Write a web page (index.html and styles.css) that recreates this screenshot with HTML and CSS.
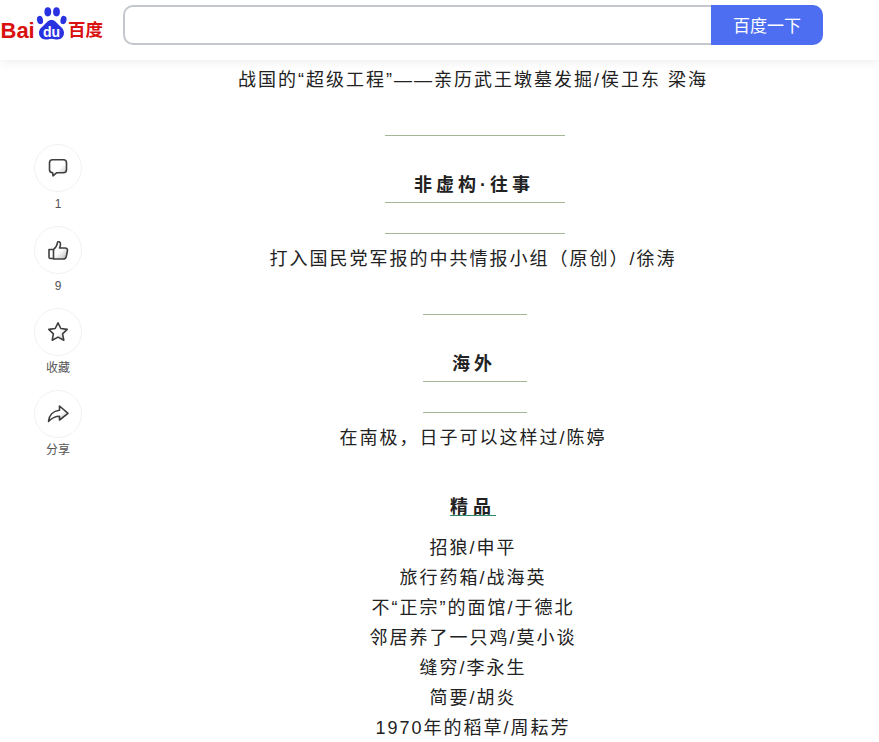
FILE: index.html
```html
<!DOCTYPE html>
<html lang="zh-CN">
<head>
<meta charset="utf-8">
<title>百度一下</title>
<link rel="stylesheet" href="styles.css">
</head>
<body>
<header class="topbar">
  <svg class="logo" width="104" height="42" viewBox="0 0 104 42">
    <text class="logo-en" x="0.500" y="37.500">Bai</text>
    <g class="paw">
      <ellipse cx="40" cy="20" rx="3" ry="4.200" transform="rotate(-12 40 20)"/>
      <ellipse cx="47.800" cy="11.800" rx="3.400" ry="4.600"/>
      <ellipse cx="56.500" cy="11.800" rx="3.400" ry="4.600"/>
      <ellipse cx="63.500" cy="20" rx="3" ry="4.200" transform="rotate(12 63.500 20)"/>
      <path d="M51.500 20c-3.600 0-5 2.700-7.300 5-2.500 2.300-5.200 4-5.200 8 0 3.600 2.900 6.500 6.500 6.500 2.500 0 4-.8 6-.8s3.500.8 6 .8c3.600 0 6.500-2.900 6.500-6.500 0-4-2.700-5.700-5.200-8-2.300-2.300-3.700-5-7.300-5z"/>
    </g>
    <text class="logo-du" x="51.500" y="36.500">du</text>
    <text class="logo-cn" x="68" y="36">百度</text>
  </svg>
  <form class="search">
    <input class="search-input" type="text" aria-label="搜索">
    <button class="search-btn" type="button">百度一下</button>
  </form>
</header>
<div class="page">
  <aside class="actions">
    <div class="action">
      <div class="circle">
        <svg width="22" height="22" viewBox="0 0 22 22"><defs><linearGradient id="g" x1="0.200" y1="0.200" x2="1" y2="1"><stop offset="0.450" stop-color="#fff"/><stop offset="1" stop-color="#b5b5b5"/></linearGradient></defs>
          <path class="ico" d="M5.500 2.800h11c1.900 0 3 1.100 3 3v7c0 1.900-1.100 3-3 3H9.500L6 18.800l-.3-3C3.700 15.600 2.500 14.600 2.500 12.800v-7c0-1.900 1.100-3 3-3z"/></svg>
      </div>
      <span class="label">1</span>
    </div>
    <div class="action">
      <div class="circle">
        <svg width="22" height="22" viewBox="0 0 22 22">
          <path class="ico" d="M2 10.500h4.500v9h-3c-1 0-1.500-.6-1.500-1.500zM6.500 10.500c2-1.500 3.500-3.500 4-7 .2-1.300 3-1.200 3 1.500 0 1.500-.5 3-1 4h5.500c1.700 0 2.800 1.300 2.400 3l-1.100 5.500c-.4 1.500-1.300 2.500-3 2.500H6.500z"/></svg>
      </div>
      <span class="label">9</span>
    </div>
    <div class="action">
      <div class="circle">
        <svg width="22" height="22" viewBox="0 0 22 22">
          <path class="ico" d="M11 1.800l2.800 5.700 6.400.9-4.600 4.400 1.200 6.400-5.800-3.100-5.800 3.100 1.200-6.400L1.800 8.400l6.400-.9z"/></svg>
      </div>
      <span class="label">收藏</span>
    </div>
    <div class="action">
      <div class="circle">
        <svg width="22" height="22" viewBox="0 0 22 22">
          <path class="ico" d="M12.500 3l8.500 7.300-8.500 6.700v-3.800c-4.500 0-7.500 1.500-11 5.300.5-6 4.500-10.500 11-11.200z"/></svg>
      </div>
      <span class="label">分享</span>
    </div>
  </aside>
  <main class="article">
    <p class="line">战国的“超级工程”——亲历武王墩墓发掘/侯卫东 梁海</p>

    <section class="block">
      <div class="rule rule-wide"></div>
      <h2 class="title">非虚构·往事</h2>
      <div class="rule rule-wide rule-after"></div>
      <div class="rule rule-wide rule-last"></div>
      <p class="line">打入国民党军报的中共情报小组（原创）/徐涛</p>
    </section>

    <section class="block">
      <div class="rule rule-mid"></div>
      <h2 class="title">海外</h2>
      <div class="rule rule-mid rule-after"></div>
      <div class="rule rule-mid rule-last"></div>
      <p class="line">在南极，日子可以这样过/陈婷</p>
    </section>

    <section class="block-plain">
      <h2 class="title-inline"><span class="title-text">精品</span></h2>
      <p class="line">招狼/申平</p>
      <p class="line">旅行药箱/战海英</p>
      <p class="line">不“正宗”的面馆/于德北</p>
      <p class="line">邻居养了一只鸡/莫小谈</p>
      <p class="line">缝穷/李永生</p>
      <p class="line">简要/胡炎</p>
      <p class="line">1970年的稻草/周耘芳</p>
    </section>
  </main>
</div>
</body>
</html>
```
FILE: styles.css
```css
html, body {
  margin: 0;
  padding: 0;
  height: 100%;
  overflow: hidden;
  background: #fff;
}
body {
  font-family: "Liberation Sans", "Noto Sans CJK SC", sans-serif;
  color: #222;
}
.topbar {
  height: 60px;
  display: flex;
  align-items: flex-start;
  background: #fff;
  box-shadow: 0 2px 10px rgba(0, 0, 0, 0.07);
  position: relative;
}
.logo {
  display: block;
  flex: none;
}
.logo-en {
  font: bold 22px "Liberation Sans", sans-serif;
  fill: #d9120f;
}
.logo-cn {
  font: bold 17.5px "Noto Sans CJK SC", sans-serif;
  fill: #d9120f;
}
.logo-du {
  font: bold 14px "Liberation Sans", sans-serif;
  fill: #fff;
  text-anchor: middle;
}
.paw {
  fill: #2932e1;
}
.search {
  display: flex;
  margin: 5px 0 0 19px;
  height: 40px;
}
.search-input {
  box-sizing: border-box;
  width: 588px;
  height: 40px;
  border: 2px solid #c4c7ce;
  border-right: 0;
  border-radius: 10px 0 0 10px;
  outline: 0;
  padding: 0 12px;
  background: #fff;
}
.search-btn {
  width: 112px;
  height: 40px;
  border: 0;
  border-radius: 0 10px 10px 0;
  background: #4e6ef2;
  color: #fff;
  font: 17px "Liberation Sans", "Noto Sans CJK SC", sans-serif;
  padding: 0 0 2px;
}
.page {
  display: flex;
  align-items: flex-start;
}
.actions {
  flex: none;
  width: 48px;
  margin: 84px 0 0 34px;
}
.action {
  height: 82px;
  display: flex;
  flex-direction: column;
  align-items: center;
}
.circle {
  box-sizing: border-box;
  width: 48px;
  height: 48px;
  border: 1px solid #f2f2f2;
  border-radius: 50%;
  display: flex;
  align-items: center;
  justify-content: center;
}
.ico {
  fill: url(#g);
  stroke: #3f3f3f;
  stroke-width: 1.6;
  stroke-linejoin: round;
}
.label {
  margin-top: 3px;
  font-size: 12px;
  line-height: 18px;
  color: #555;
}
.article {
  flex: none;
  width: 786px;
  padding-top: 4px;
  text-align: center;
}
.line {
  margin: 0 0 -1px;
  padding: 1px 4px 0 0;
  font-size: 18px;
  line-height: 30px;
  letter-spacing: 2px;
  color: #222;
}
.block {
  padding-top: 41px;
}
.rule {
  height: 1px;
  margin: 0 auto;
  background: #a3b795;
}
.rule-wide {
  width: 180px;
}
.rule-mid {
  width: 104px;
}
.rule-last {
  margin-top: 30px;
  margin-bottom: 9px;
}
.title {
  margin: 34px 0 2px;
  padding-right: 2px;
  font-size: 18px;
  line-height: 30px;
  font-weight: 700;
  letter-spacing: 4px;
  color: #222;
}
.block-plain {
  padding-top: 47px;
}
.title-inline {
  margin: 0 0 16px;
  font-size: 18px;
  line-height: 16px;
  font-weight: 700;
}
.title-text {
  display: inline-block;
  margin-right: 4px;
  padding-top: 1px;
  margin-top: -1px;
  letter-spacing: 5px;
  line-height: 15px;
  border-bottom: 1px solid #2a8a6a;
  color: #222;
}
```
